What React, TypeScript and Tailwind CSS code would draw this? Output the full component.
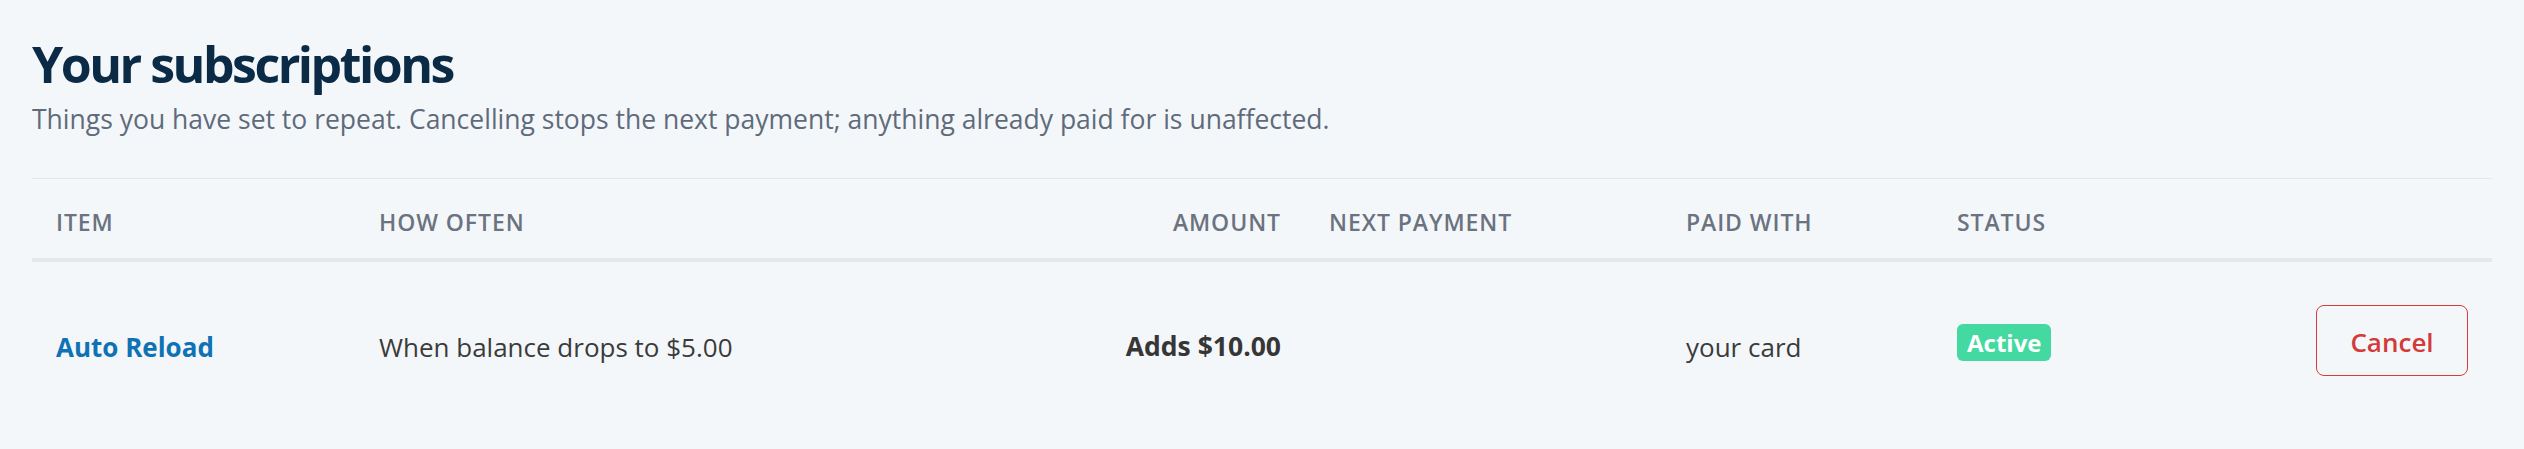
const FONT = "font-['Open_Sans','Noto_Sans',sans-serif]";

const headers = [
  { label: 'Item', align: 'left' },
  { label: 'How often', align: 'left' },
  { label: 'Amount', align: 'right' },
  { label: 'Next payment', align: 'left' },
  { label: 'Paid with', align: 'left' },
  { label: 'Status', align: 'left' },
  { label: '', align: 'right' },
];

const GRID =
  'grid grid-cols-[323px_600px_350px_357px_271px_1fr_auto] items-center';

export default function App() {
  return (
    <main className={`min-h-screen bg-[#f4f7fa] px-8 pt-8 ${FONT}`}>
      {/* Heading */}
      <h1 className="text-[50px] leading-[1.28] font-bold tracking-[-0.05em] text-[#0b2a45]">
        Your subscriptions
      </h1>
      <p className="mt-1 text-[26.5px] leading-[1.5] text-[#5f6b7b]">
        Things you have set to repeat. Cancelling stops the next payment;
        anything already paid for is unaffected.
      </p>

      {/* Table */}
      <div className="mt-[38px] border-t border-[#e3e6ea]">
        <div className={`${GRID} h-[83px] pt-[7px] border-b-4 border-[#e5e7eb]`}>
          {headers.map((h, i) => (
            <div
              key={i}
              className={`px-6 text-[23px] font-semibold uppercase tracking-[0.04em] text-[#6b7380] ${
                h.align === 'right' ? 'text-right' : 'text-left'
              }`}
            >
              {h.label}
            </div>
          ))}
        </div>

        <div className={`${GRID} h-[157px] text-[26px] text-[#3b3b3b]`}>
          <div className="px-6 pt-[14px]">
            <a href="#" className="font-bold text-[#0f72b4]">
              Auto Reload
            </a>
          </div>
          <div className="px-6 pt-[14px]">When balance drops to $5.00</div>
          <div className="px-6 pt-[14px] text-right text-[26.5px] font-bold text-[#363636]">
            Adds $10.00
          </div>
          <div className="px-6"></div>
          <div className="px-6 pt-[14px]">your card</div>
          <div className="px-6 pt-[5px]">
            <span className="inline-block h-[37px] rounded-md bg-[#44d9a1] px-[10px] text-[24px] leading-[37px] font-bold text-white">
              Active
            </span>
          </div>
          <div className="px-6 flex justify-end">
            <button className="h-[71px] w-[152px] rounded-lg border-[1.5px] border-[#d93a3a] pt-[4px] text-[26px] font-semibold text-[#d33a3a]">
              Cancel
            </button>
          </div>
        </div>
      </div>
    </main>
  );
}
